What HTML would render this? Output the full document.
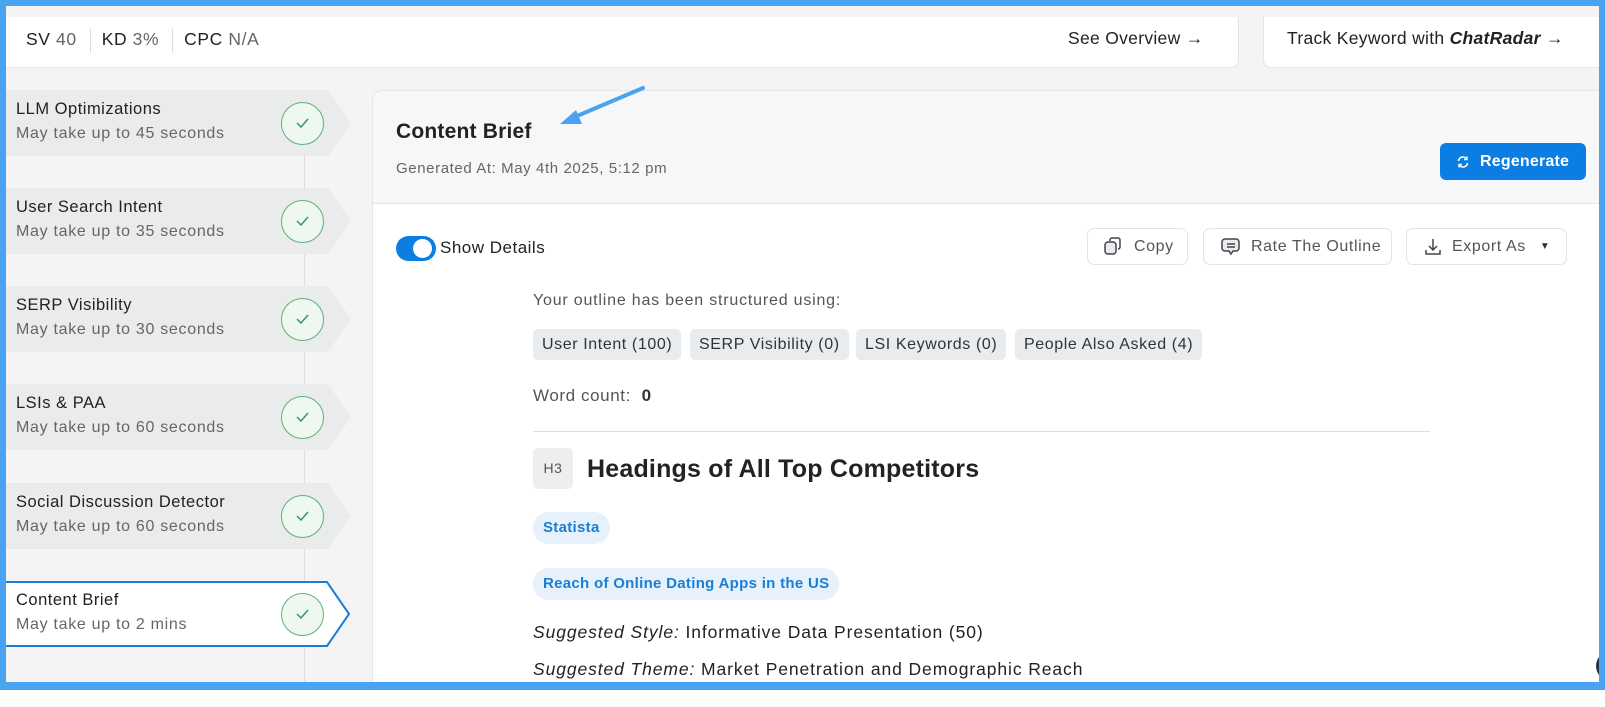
<!DOCTYPE html>
<html><head><meta charset="utf-8"><style>
*{box-sizing:border-box;margin:0;padding:0}
body{width:1605px;height:707px;overflow:hidden;background:#fff;font-family:"Liberation Sans",sans-serif;position:relative;color:#222;letter-spacing:0.6px}
.frame{position:absolute;left:0;top:0;width:1605px;height:690px;background:#f4f4f5;border:6px solid #4aa3f0;border-bottom-width:8px;overflow:hidden}
.abs{position:absolute}
.hcard{position:absolute;background:#fff;border:1px solid #e6e6e6;border-top:none}
.item{position:absolute;left:0;width:346px;height:66px}
.item svg{position:absolute;left:0;top:0}
.item .t{position:absolute;left:10px;top:10px;font-size:16.5px;color:#222;letter-spacing:0.5px}
.item .s{position:absolute;left:10px;top:35px;font-size:16px;color:#666;letter-spacing:0.7px}
.circ{position:absolute;left:275px;top:12px;width:43px;height:43px;border-radius:50%;border:1.5px solid #5fb07a;background:#eef7f0}
.vline{position:absolute;left:298px;top:140px;width:1px;height:540px;background:#dcdcdc}
.btn{position:absolute;top:222px;height:37px;border:1px solid #e2e4e8;border-radius:7px;background:#fff;font-size:16px;color:#555;display:flex;align-items:center}
.chip{position:absolute;top:323px;height:31px;background:#e9ecef;border-radius:5px;font-size:16px;color:#333;padding:0 9px;line-height:31px}
.bchip{position:absolute;height:32px;background:#e6f1fc;border-radius:16px;font-size:15px;color:#1a7fd4;font-weight:bold;padding:0 10px;line-height:32px;letter-spacing:0.3px}
</style></head><body>
<div class="frame">
 <div class="hcard" style="left:-6px;top:11px;width:1239px;height:51px;border-bottom-right-radius:8px"></div>
 <div class="hcard" style="left:1257px;top:11px;width:360px;height:51px;border-bottom-left-radius:8px;border-left:1px solid #e6e6e6"></div>
 <div class="abs" style="left:20px;top:22px;font-size:17.5px;color:#222;white-space:nowrap">SV <span style="color:#666">40</span><span style="display:inline-block;width:1px;height:25px;background:#ddd;vertical-align:middle;margin:0 11px 0 13px"></span>KD <span style="color:#666">3%</span><span style="display:inline-block;width:1px;height:25px;background:#ddd;vertical-align:middle;margin:0 11px 0 13px"></span>CPC <span style="color:#666">N/A</span></div>
 <div class="abs" style="left:1062px;top:22px;font-size:17.5px;color:#222;letter-spacing:0.3px">See Overview →</div>
 <div class="abs" style="left:1281px;top:22px;font-size:17.5px;color:#222;letter-spacing:0.3px">Track Keyword with <i><b style="font-weight:600">ChatRadar</b></i> →</div>

 <div class="vline"></div>
 <div class="item" style="top:84px"><svg width="346" height="66"><path d="M0 0H322L345 33L322 66H0Z" fill="#eaecec"/></svg><div class="t">LLM Optimizations</div><div class="s">May take up to 45 seconds</div><div class="circ"><svg width="40" height="40" class="abs"><path d="M15 20l4 4 7-8" fill="none" stroke="#3a9a5a" stroke-width="1.5"/></svg></div></div>
 <div class="item" style="top:182px"><svg width="346" height="66"><path d="M0 0H322L345 33L322 66H0Z" fill="#eaecec"/></svg><div class="t">User Search Intent</div><div class="s">May take up to 35 seconds</div><div class="circ"><svg width="40" height="40" class="abs"><path d="M15 20l4 4 7-8" fill="none" stroke="#3a9a5a" stroke-width="1.5"/></svg></div></div>
 <div class="item" style="top:280px"><svg width="346" height="66"><path d="M0 0H322L345 33L322 66H0Z" fill="#eaecec"/></svg><div class="t">SERP Visibility</div><div class="s">May take up to 30 seconds</div><div class="circ"><svg width="40" height="40" class="abs"><path d="M15 20l4 4 7-8" fill="none" stroke="#3a9a5a" stroke-width="1.5"/></svg></div></div>
 <div class="item" style="top:378px"><svg width="346" height="66"><path d="M0 0H322L345 33L322 66H0Z" fill="#eaecec"/></svg><div class="t">LSIs &amp; PAA</div><div class="s">May take up to 60 seconds</div><div class="circ"><svg width="40" height="40" class="abs"><path d="M15 20l4 4 7-8" fill="none" stroke="#3a9a5a" stroke-width="1.5"/></svg></div></div>
 <div class="item" style="top:477px"><svg width="346" height="66"><path d="M0 0H322L345 33L322 66H0Z" fill="#eaecec"/></svg><div class="t">Social Discussion Detector</div><div class="s">May take up to 60 seconds</div><div class="circ"><svg width="40" height="40" class="abs"><path d="M15 20l4 4 7-8" fill="none" stroke="#3a9a5a" stroke-width="1.5"/></svg></div></div>
 <div class="item" style="top:575px"><svg width="346" height="66"><path d="M-2 1H321L343 33L321 65H-2Z" fill="#fff" stroke="#1a7fd4" stroke-width="2"/></svg><div class="t">Content Brief</div><div class="s">May take up to 2 mins</div><div class="circ"><svg width="40" height="40" class="abs"><path d="M15 20l4 4 7-8" fill="none" stroke="#3a9a5a" stroke-width="1.5"/></svg></div></div>

 <div class="abs" style="left:366px;top:84px;width:1250px;height:620px;background:#fff;border:1px solid #e3e5e8;border-top-left-radius:10px;overflow:hidden">
  <div class="abs" style="left:0;top:0;width:100%;height:113px;background:#f6f7f9;border-bottom:1px solid #e3e5e8"></div>
  <div class="abs" style="left:23px;top:29px;font-size:21px;font-weight:bold;color:#222;letter-spacing:0.2px">Content Brief</div>
  <div class="abs" style="left:23px;top:69px;font-size:15px;color:#666">Generated At: May 4th 2025, 5:12 pm</div>
  <div class="abs" style="left:1067px;top:52px;width:146px;height:37px;background:#0b7de3;border-radius:6px;color:#fff;font-size:16px;font-weight:bold;line-height:37px;padding-left:40px;letter-spacing:0.2px">Regenerate
   <svg class="abs" style="left:16px;top:12px" width="14" height="14" viewBox="0 0 14 14"><path d="M2.5 6A4.5 4.5 0 0 1 11 4.5M11.5 8A4.5 4.5 0 0 1 3 9.5" fill="none" stroke="#fff" stroke-width="1.6"/><path d="M11 1.5v3H8M3 12.5v-3h3" fill="none" stroke="#fff" stroke-width="1.4"/></svg></div>
  <div class="abs" style="left:23px;top:145px;width:40px;height:25px;background:#0b7de3;border-radius:13px"><div class="abs" style="left:17px;top:3px;width:19px;height:19px;background:#fff;border-radius:50%"></div></div>
  <div class="abs" style="left:67px;top:147px;font-size:17px;color:#222;letter-spacing:0.5px">Show Details</div>
 </div>
 <div class="btn" style="left:1081px;width:101px;padding-left:15px"><svg width="22" height="22" viewBox="0 0 22 22" style="margin-right:9px"><rect x="2" y="6" width="11" height="12" rx="3" fill="#e8ecf2" stroke="#444" stroke-width="1.5"/><path d="M7 5V4a2 2 0 0 1 2-2h6a2 2 0 0 1 2 2v7a2 2 0 0 1-2 2" fill="none" stroke="#444" stroke-width="1.5"/></svg>Copy</div>
 <div class="btn" style="left:1197px;width:189px;padding-left:16px"><svg width="22" height="22" viewBox="0 0 22 22" style="margin-right:9px"><path d="M5 3h11a3 3 0 0 1 3 3v6a3 3 0 0 1-3 3h-3l-2 3-2-3H5a3 3 0 0 1-3-3V6a3 3 0 0 1 3-3z" fill="#e8ecf2" stroke="#444" stroke-width="1.5"/><path d="M7 8h8M7 11h8" stroke="#444" stroke-width="1.4"/></svg>Rate The Outline</div>
 <div class="btn" style="left:1400px;width:161px;padding-left:16px"><svg width="20" height="20" viewBox="0 0 20 20" style="margin-right:9px"><path d="M10 2v11M6 9l4 4 4-4M3 13v4h14v-4" fill="none" stroke="#444" stroke-width="1.5"/></svg>Export As<span style="font-size:10px;margin-left:14px;color:#333">▼</span></div>

 <div class="abs" style="left:527px;top:286px;font-size:16px;color:#555;letter-spacing:0.8px">Your outline has been structured using:</div>
 <div class="chip" style="left:527px">User Intent (100)</div>
 <div class="chip" style="left:684px">SERP Visibility (0)</div>
 <div class="chip" style="left:850px">LSI Keywords (0)</div>
 <div class="chip" style="left:1009px">People Also Asked (4)</div>
 <div class="abs" style="left:527px;top:380px;font-size:17px;color:#555">Word count: &nbsp;<b style="color:#333">0</b></div>
 <div class="abs" style="left:527px;top:425px;width:897px;height:1px;background:#ddd"></div>
 <div class="abs" style="left:527px;top:442px;width:40px;height:41px;background:#eceef0;border-radius:5px;font-size:14px;color:#555;text-align:center;line-height:41px">H3</div>
 <div class="abs" style="left:581px;top:449px;font-size:25px;font-weight:bold;color:#222;letter-spacing:0.2px">Headings of All Top Competitors</div>
 <div class="bchip" style="left:527px;top:506px">Statista</div>
 <div class="bchip" style="left:527px;top:562px">Reach of Online Dating Apps in the US</div>
 <div class="abs" style="left:527px;top:616px;font-size:17.5px;color:#222;letter-spacing:0.9px"><i>Suggested Style:</i> Informative Data Presentation (50)</div>
 <div class="abs" style="left:527px;top:653px;font-size:17.5px;color:#222;letter-spacing:0.9px"><i>Suggested Theme:</i> Market Penetration and Demographic Reach</div>
 <div class="abs" style="left:1590px;top:645px;width:30px;height:30px;border-radius:50%;background:#1d3550"></div>
 <svg class="abs" style="left:550px;top:74px" width="100" height="50"><path d="M87 8L14 39" stroke="#4aa3f0" stroke-width="4" stroke-linecap="round"/><path d="M4 44L20 30L26 44Z" fill="#4aa3f0"/></svg>
</div>
</body></html>
